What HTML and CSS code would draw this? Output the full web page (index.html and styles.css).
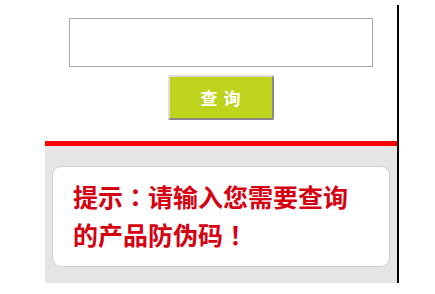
FILE: index.html
```html
<!DOCTYPE html>
<html lang="zh-CN">
<head>
<meta charset="utf-8">
<title>防伪查询</title>
<link rel="stylesheet" href="styles.css">
</head>
<body>
<div class="page">
  <div class="search">
    <input class="code-input" type="text">
    <button class="query-btn" type="button">查 询</button>
  </div>
  <div class="notice-area">
    <div class="notice">提示<span class="punct" lang="zh-TW">：</span>请输入您需要查询的产品防伪码<span class="punct" lang="zh-TW">！</span></div>
  </div>
</div>
</body>
</html>
```

FILE: styles.css
```css
html, body {
  margin: 0;
  padding: 0;
  background: #fff;
}

.page {
  margin: 5px 0 0 45px;
  width: 352px;
  border-right: 2px solid #000;
  font-family: "Noto Sans CJK SC", "Liberation Sans", sans-serif;
}

.search {
  display: flex;
  flex-direction: column;
  align-items: center;
  padding: 13px 0 21px;
}

.code-input {
  box-sizing: border-box;
  width: 304px;
  height: 49px;
  margin: 0;
  border: 1px solid #aaa;
  background: #fff;
  outline: none;
}

.query-btn {
  box-sizing: border-box;
  width: 106px;
  height: 45px;
  margin-top: 8px;
  padding: 0;
  border: 2px solid;
  border-color: #ddd #8a8a8a #8a8a8a #ddd;
  border-radius: 2px;
  background: #bdd31c;
  color: #fff;
  font-family: "Noto Sans CJK SC", sans-serif;
  font-weight: 700;
  font-size: 17px;
  line-height: 20px;
  letter-spacing: 1px;
}

.notice-area {
  border-top: 5px solid #ff0000;
  background: #e5e5e5;
  padding: 20px 7px 16px;
}

.notice {
  background: #fff;
  border: 1px solid #d0d0d0;
  border-radius: 9px;
  padding: 10px 19px 13px 20px;
  color: #d60010;
  font-weight: 700;
  font-size: 25px;
  line-height: 38px;
}

.punct {
  font-family: "Noto Sans CJK TC", "Noto Sans CJK SC", sans-serif;
}
```
